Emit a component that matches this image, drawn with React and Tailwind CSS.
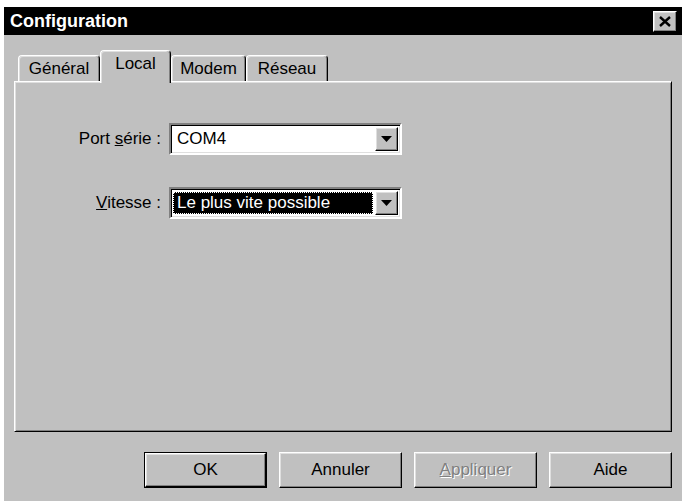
import React from 'react';

const raised = 'border border-t-white border-l-white border-r-black border-b-black shadow-[inset_-1px_-1px_0_#808080,inset_1px_1px_0_#dfdfdf]';

const Tab = ({ label, active, width }) => (
  <div
    className={`flex justify-center rounded-t-[4px] border-t border-l border-r border-t-white border-l-white border-r-black shadow-[inset_-1px_0_0_#808080,inset_1px_1px_0_#dfdfdf] bg-[#c0c0c0] ${
      active ? 'relative z-10 -mb-[2px] h-[33px] pt-[3px]' : 'h-[26px] pt-[3px]'
    } ${width}`}
  >
    <span className="leading-[20px]">{label}</span>
  </div>
);

const ArrowButton = () => (
  <div className={`flex h-full w-[23px] items-center justify-center bg-[#c0c0c0] ${raised}`}>
    <svg width="11" height="6" viewBox="0 0 11 6">
      <polygon points="0,0 11,0 5.5,6" fill="#000" />
    </svg>
  </div>
);

const Combo = ({ children }) => (
  <div className="flex h-[32px] w-[233px] border-2 border-t-[#808080] border-l-[#808080] border-b-white border-r-white bg-white shadow-[inset_1px_1px_0_#000,inset_-1px_-1px_0_#dfdfdf]">
    <div className="flex flex-1 items-center py-[3px] pl-[2px] pr-[2px]">{children}</div>
    <div className="py-[2px] pr-[2px]">
      <ArrowButton />
    </div>
  </div>
);

const Button = ({ children, disabled, isDefault }) => {
  const inner = (
    <div className={`flex h-full w-full items-center justify-center bg-[#c0c0c0] ${raised}`}>
      {children}
    </div>
  );
  return (
    <div className={`h-[36px] w-[123px] ${isDefault ? 'border border-black' : ''} ${disabled ? 'text-[#808080] [text-shadow:1px_1px_0_#fff]' : ''}`}>
      {inner}
    </div>
  );
};

export default function App() {
  return (
    <div className="h-[501px] w-[685px] overflow-hidden bg-white pt-[7px] pl-[3px] font-['Liberation_Sans',Arial,sans-serif] text-[17px] text-black">
      <div className="flex h-[494px] w-[679px] flex-col border-l border-l-white bg-[#c0c0c0]">
        {/* title bar */}
        <div className="flex h-[28px] items-center justify-between bg-black pl-[6px] pr-[5px]">
          <span className="text-[18px] font-bold text-white">Configuration</span>
          <div className={`flex h-[21px] w-[24px] items-center justify-center bg-[#c0c0c0] ${raised}`}>
            <svg width="12" height="11" viewBox="0 0 12 11">
              <path d="M1 1 L11 10 M11 1 L1 10" stroke="#000" strokeWidth="2.4" />
            </svg>
          </div>
        </div>

        <div className="flex flex-col pt-[15px] pl-[10px] pr-[10px]">
          {/* tabs */}
          <div className="flex items-end pl-[4px]">
            <Tab label="Général" width="w-[82px]" />
            <Tab label="Local" active width="w-[71px]" />
            <Tab label="Modem" width="w-[75px]" />
            <Tab label="Réseau" width="w-[82px]" />
          </div>

          {/* panel */}
          <div className="flex h-[351px] flex-col gap-[32px] border border-t-white border-l-white border-r-black border-b-black pt-[41px] shadow-[inset_1px_1px_0_#dfdfdf,inset_-1px_-1px_0_#808080]">
            <div className="flex items-center gap-[8px]">
              <div className="w-[146px] text-right">
                Port <span className="underline">s</span>érie :
              </div>
              <Combo>
                <span className="pl-[4px]">COM4</span>
              </Combo>
            </div>
            <div className="flex items-center gap-[8px]">
              <div className="w-[146px] text-right">
                <span className="underline">V</span>itesse :
              </div>
              <Combo>
                <div className="flex h-full w-full items-center border border-dotted border-white bg-black pl-[3px] text-white">
                  Le plus vite possible
                </div>
              </Combo>
            </div>
          </div>

          {/* buttons */}
          <div className="mt-[20px] flex justify-end gap-[12px]">
            <Button isDefault>OK</Button>
            <Button>Annuler</Button>
            <Button disabled>
              <span>
                <span className="underline">A</span>ppliquer
              </span>
            </Button>
            <Button>Aide</Button>
          </div>
        </div>
      </div>
    </div>
  );
}
